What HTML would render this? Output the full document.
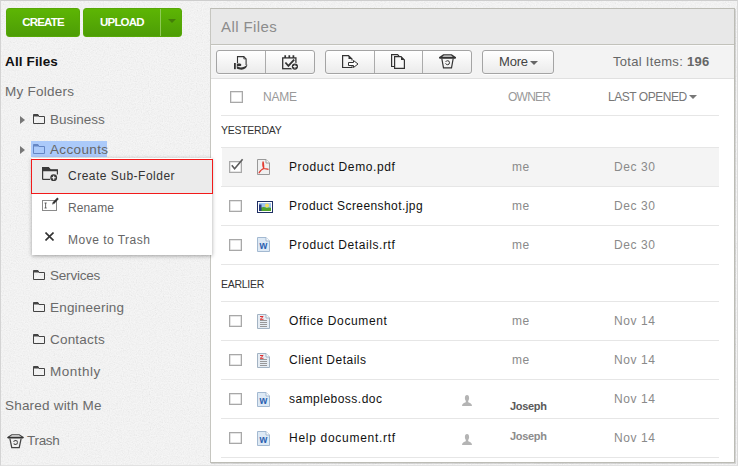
<!DOCTYPE html>
<html><head><meta charset="utf-8"><title>All Files</title>
<style>
*{box-sizing:border-box;margin:0;padding:0}
html,body{width:738px;height:466px;overflow:hidden}
body{background:#f8f8f8;font-family:"Liberation Sans",sans-serif;font-size:12px;color:#333;position:relative}
.abs{position:absolute}
#frame{position:absolute;left:0;top:0;width:738px;height:466px;border-left:1px solid #d4d4d4;border-top:1px solid #cecece;border-right:1px solid #dadada;border-bottom:1px solid #e2e2e2}
.gbtn{position:absolute;top:8px;height:29px;border-radius:3px;background:linear-gradient(#5db504,#4d9d06);color:#fff;font-weight:bold;font-size:11.5px;line-height:27px;text-align:center;border:1px solid #57a806;letter-spacing:-.8px}
.side{position:absolute;font-size:13.5px;color:#6a6a6a;white-space:nowrap;line-height:17px;letter-spacing:.2px}
.fold{position:absolute;width:13px;height:11px}
.tri{position:absolute;width:0;height:0;border-top:4px solid transparent;border-bottom:4px solid transparent;border-left:5px solid #777}
#panel{position:absolute;left:210px;top:8px;width:525px;height:455px;background:#fff;border:1px solid #bcbcb5;border-left-color:#c6c6c0;box-shadow:1px 1px 0 rgba(0,0,0,.12)}
#phead{position:absolute;left:0;top:0;width:523px;height:36px;background:#e8e8e8;border-bottom:1px solid #c2c2bb}
#ptool{position:absolute;left:0;top:36px;width:523px;height:34px;background:#f3f3f3;border-top:1px solid #fafafa;border-bottom:1px solid #e0e0e0}
.tbtn{position:absolute;top:41px;height:24px;border:1px solid #a4a4a4;border-radius:3px;background:linear-gradient(#ffffff,#ebebeb);box-shadow:0 1px 0 rgba(255,255,255,.9)}
.tdiv{position:absolute;top:0;width:1px;height:22px;background:#ababab}
.row{position:absolute;left:10px;width:498px;height:39px;border-bottom:1px solid #e6e6e6}
.cb{position:absolute;left:8px;width:13px;height:12px;border:1px solid #a8a8a8;background:#fff;box-shadow:inset 0 0 0 .5px #ccc}
.fn{position:absolute;left:68px;font-size:12px;color:#111;white-space:nowrap;line-height:16px;letter-spacing:.42px}
.ow{position:absolute;left:291px;font-size:12px;color:#8a8a8a;white-space:nowrap;line-height:16px;letter-spacing:.42px}
.dt{position:absolute;left:393px;font-size:12px;color:#8a8a8a;white-space:nowrap;line-height:16px;letter-spacing:.6px}
.sec{position:absolute;left:10px;font-size:10.5px;color:#333;line-height:14px;letter-spacing:-.27px}
.hd{position:absolute;font-size:12px;color:#999;line-height:14px;white-space:nowrap}
.ic{position:absolute;left:36px}
#menu{position:absolute;left:32px;top:158px;width:180px;height:97px;background:#fff;box-shadow:0 1px 4px rgba(0,0,0,.35);z-index:5}
.mi{position:absolute;left:36px;font-size:12px;color:#666;line-height:16px;white-space:nowrap;letter-spacing:.49px}
</style></head><body>
<svg class="abs" style="left:0;top:0;width:738px;height:466px;opacity:.22" viewBox="0 0 738 466"><filter id="nz" x="0" y="0" width="100%" height="100%"><feTurbulence type="fractalNoise" baseFrequency="0.85" numOctaves="2" seed="3"/><feColorMatrix type="saturate" values="0"/></filter><rect width="738" height="466" filter="url(#nz)"/></svg>
<div id="frame"></div>

<div class="gbtn" style="left:6px;width:74px">CREATE</div>
<div class="gbtn" style="left:83px;width:99px;text-align:left;padding-left:16px">UPLOAD
  <div class="abs" style="left:76px;top:0;width:1px;height:27px;background:#8fc957"></div>
  <div class="abs" style="left:84px;top:10px;width:0;height:0;border-left:4px solid transparent;border-right:4px solid transparent;border-top:4px solid #437f08"></div>
</div>

<div class="side" style="left:5px;top:53px;color:#111;font-weight:bold;letter-spacing:.13px">All Files</div>
<div class="side" style="left:5px;top:83px;letter-spacing:.25px">My Folders</div>

<!-- Business -->
<div class="tri" style="left:20px;top:116px"></div>
<svg class="fold" style="left:33px;top:114px" viewBox="0 0 13 11"><path d="M0.5 9.500V0.500H5L6 2.500H11.500V9.500Z" fill="none" stroke="#444" stroke-width="1"/><path d="M0.500 0.500H5L6 2.500H0.500Z" fill="#444"/></svg>
<div class="side" style="left:50px;top:111px;letter-spacing:0">Business</div>

<!-- Accounts -->
<div class="tri" style="left:20px;top:146px"></div>
<div class="abs" style="left:31px;top:141px;width:76px;height:16px;background:#abcafa"></div>
<svg class="fold" style="left:33px;top:144px" viewBox="0 0 13 11"><path d="M0.5 9.500V0.500H5L6 2.500H11.500V9.500Z" fill="none" stroke="#6486c4" stroke-width="1"/><path d="M0.500 0.500H5L6 2.500H0.500Z" fill="#6486c4"/></svg>
<div class="side" style="left:50px;top:141px;letter-spacing:.37px;color:#666">Accounts</div>

<!-- others -->
<svg class="fold" style="left:33px;top:270px" viewBox="0 0 13 11"><path d="M0.5 9.500V0.500H5L6 2.500H11.500V9.500Z" fill="none" stroke="#444" stroke-width="1"/><path d="M0.500 0.500H5L6 2.500H0.500Z" fill="#444"/></svg>
<div class="side" style="left:50px;top:267px;letter-spacing:-.2px">Services</div>
<svg class="fold" style="left:33px;top:302px" viewBox="0 0 13 11"><path d="M0.5 9.500V0.500H5L6 2.500H11.500V9.500Z" fill="none" stroke="#444" stroke-width="1"/><path d="M0.500 0.500H5L6 2.500H0.500Z" fill="#444"/></svg>
<div class="side" style="left:50px;top:299px">Engineering</div>
<svg class="fold" style="left:33px;top:334px" viewBox="0 0 13 11"><path d="M0.5 9.500V0.500H5L6 2.500H11.500V9.500Z" fill="none" stroke="#444" stroke-width="1"/><path d="M0.500 0.500H5L6 2.500H0.500Z" fill="#444"/></svg>
<div class="side" style="left:50px;top:331px">Contacts</div>
<svg class="fold" style="left:33px;top:366px" viewBox="0 0 13 11"><path d="M0.5 9.500V0.500H5L6 2.500H11.500V9.500Z" fill="none" stroke="#444" stroke-width="1"/><path d="M0.500 0.500H5L6 2.500H0.500Z" fill="#444"/></svg>
<div class="side" style="left:50px;top:363px;letter-spacing:.5px">Monthly</div>

<div class="side" style="left:5px;top:397px">Shared with Me</div>
<svg class="abs" style="left:6.500px;top:433.500px;width:17px;height:15px" viewBox="0 0 16 15" preserveAspectRatio="none"><path d="M4.5 0.800H11.500L15 3.200H1Z" fill="none" stroke="#444" stroke-width="1"/><path d="M0.700 3.700H15.300" stroke="#333" stroke-width="1.6"/><path d="M2.700 4.500L4.500 13.700H11.500L13.300 4.500" fill="none" stroke="#444" stroke-width="1.2"/><circle cx="8" cy="8.500" r="1.900" fill="none" stroke="#444" stroke-width="1" stroke-dasharray="4.500 1.500"/></svg>
<div class="side" style="left:27px;top:432px;letter-spacing:-.3px">Trash</div>

<!-- context menu -->
<div id="menu">
  <div class="abs" style="left:-1px;top:1px;width:182px;height:35px;background:#ebebeb;border:1px solid #f21a1a"></div>
  <svg class="abs" style="left:10px;top:9px;width:17px;height:15px" viewBox="0 0 17 15"><path d="M0.600 12.400V0.600H6.500L8.500 2.800H15.400V7.500" fill="none" stroke="#3a3a3a" stroke-width="1.200"/><path d="M0.600 0.600H6.500L8.500 2.800H15.400V4.300H0.600Z" fill="#3a3a3a"/><path d="M0.600 12.400H8" stroke="#3a3a3a" stroke-width="1.200"/><circle cx="11.700" cy="10.700" r="3.400" fill="#3a3a3a"/><path d="M9.700 10.700H13.700M11.700 8.700V12.700" stroke="#fff" stroke-width="1.100"/></svg>
  <div class="mi" style="top:10px;color:#333">Create Sub-Folder</div>
  <svg class="abs" style="left:10px;top:39px;width:18px;height:15px" viewBox="0 0 18 15"><rect x="0.500" y="3.500" width="14" height="10" fill="#fff" stroke="#8a8a8a" stroke-width="1"/><path d="M2.500 6H4.700M3.600 6V11M2.500 11H4.700" stroke="#444" stroke-width=".8" fill="none"/><path d="M11.300 6.300L16 1.200" stroke="#333" stroke-width="2"/><path d="M10.200 7.600L10.600 5.600L12 7Z" fill="#333"/></svg>
  <div class="mi" style="top:42px;letter-spacing:.12px">Rename</div>
  <svg class="abs" style="left:13px;top:74px;width:9px;height:9px" viewBox="0 0 9 9"><path d="M0.500 0.500L8.500 8.500M8.500 0.500L0.500 8.500" stroke="#333" stroke-width="1.600"/></svg>
  <div class="mi" style="top:74px">Move to Trash</div>
</div>

<!-- main panel -->
<div id="panel">
  <div id="phead"><div class="abs" style="left:10px;top:8px;font-size:15px;color:#8c8c8c;line-height:20px;letter-spacing:.4px;white-space:nowrap">All Files</div></div>
  <div id="ptool"></div>
  <div class="tbtn" style="left:5px;width:99px"><div class="tdiv" style="left:48px"></div>
    <svg class="abs" style="left:17px;top:5px;width:14px;height:14px" viewBox="0 0 14 14"><path d="M3.500 7V0.600H9.800L12.100 2.900V9" fill="none" stroke="#333" stroke-width="1.100"/><path d="M9.800 0.600V2.900H12.100" fill="none" stroke="#333" stroke-width=".8"/><rect x="0" y="7" width="1.800" height="6.200" fill="#333"/><path d="M2.800 7.500H6C7.500 7.700 7.800 9.500 6.500 10.100L2.800 10.300Z" fill="#333"/><path d="M2.800 10C5 12.200 10 12 13.400 8.500C13.200 11.600 10.500 13.700 7.500 13.700C5.500 13.700 4 13.100 2.800 12.500Z" fill="#333"/></svg>
    <svg class="abs" style="left:65px;top:4px;width:17px;height:16px" viewBox="0 0 17 16"><rect x="0.700" y="2.900" width="13.200" height="10.800" fill="none" stroke="#333" stroke-width="1.300"/><path d="M3.200 0.300V3M7.300 0.300V3M11.400 0.300V3" stroke="#333" stroke-width="1.700"/><path d="M3.400 7.500L6.400 10.800L12.200 4.600" fill="none" stroke="#333" stroke-width="1.800"/><circle cx="12.900" cy="11.600" r="3.900" fill="#f6f6f6"/><circle cx="12.900" cy="11.600" r="3.100" fill="#333"/><path d="M11.100 11.600H14.700M12.900 9.800V13.400" stroke="#fff" stroke-width="1"/></svg>
  </div>
  <div class="tbtn" style="left:114px;width:147px"><div class="tdiv" style="left:48px"></div><div class="tdiv" style="left:96px"></div>
    <svg class="abs" style="left:16px;top:4px;width:17px;height:14px" viewBox="0 0 17 14"><path d="M10 11.300V12.500H0.600V0.600H6.500L10 4V5.500" fill="none" stroke="#333" stroke-width="1.200"/><path d="M6.500 0.600V4H10Z" fill="#333"/><path d="M6.500 7.500H11.500V5.500L16 9L11.500 12.500V10.500H6.500Z" fill="#fff" stroke="#333" stroke-width="1"/></svg>
    <svg class="abs" style="left:65px;top:3px;width:15px;height:15px" viewBox="0 0 15 15"><path d="M3.500 12.500H0.600V0.600H6.500L8 2" fill="none" stroke="#333" stroke-width="1.200"/><path d="M3.600 14.400V2.600H10L13.400 6V14.400Z" fill="#f8f8f8" stroke="#333" stroke-width="1.200"/><path d="M10 2.600V6H13.400Z" fill="#333"/></svg>
    <svg class="abs" style="left:112.500px;top:3px;width:17px;height:15px" viewBox="0 0 17 15"><path d="M4.500 0.900H12.500L16 3.500H1Z" fill="none" stroke="#333" stroke-width="1.400"/><path d="M0.500 3.800H16.500" stroke="#333" stroke-width="1.800"/><path d="M2.800 4.500L4.500 13.800H12.500L14.200 4.500" fill="none" stroke="#333" stroke-width="1.200"/><circle cx="8.500" cy="8.700" r="2" fill="none" stroke="#333" stroke-width="1" stroke-dasharray="5 1.500"/></svg>
  </div>
  <div class="tbtn" style="left:271px;width:72px"><div class="abs" style="left:16px;top:3px;font-size:13px;color:#444;line-height:16px;letter-spacing:-.2px">More</div>
    <div class="abs" style="left:47px;top:10px;width:0;height:0;border-left:4px solid transparent;border-right:4px solid transparent;border-top:4px solid #666"></div></div>
  <div class="abs" style="left:402px;top:45px;font-size:13px;color:#666;line-height:16px;white-space:nowrap;letter-spacing:.3px">Total Items: <b>196</b></div>

  <div class="cb" style="left:19px;top:82px"></div>
  <div class="hd" style="left:52px;top:81px;letter-spacing:-.2px">NAME</div>
  <div class="hd" style="left:297px;top:81px;letter-spacing:-.74px">OWNER</div>
  <div class="hd" style="left:397px;top:81px;color:#777;letter-spacing:-.46px">LAST OPENED</div>
  <div class="abs" style="left:478px;top:86px;width:0;height:0;border-left:4px solid transparent;border-right:4px solid transparent;border-top:4px solid #777"></div>
  <div class="abs" style="left:10px;top:106px;width:498px;height:1px;background:#e6e6e6"></div>

  <div class="sec" style="top:114px">YESTERDAY</div>
  <div class="row" style="top:138px;background:linear-gradient(to right,#fff 1px,#f4f4f4 1px);border-top:1px solid #e6e6e6;height:40px">
    <div class="cb" style="top:13px"></div>
    <svg class="abs" style="left:9px;top:10px;width:14px;height:14px" viewBox="0 0 14 14"><path d="M1.800 7.300L4.600 10.800L12.600 1.200" fill="none" stroke="#5c5c5c" stroke-width="1.600"/></svg>
    <svg class="ic" style="top:11px;width:13px;height:16px" viewBox="0 0 13 16"><path d="M0.500 0.500H9L12.500 4V15.500H0.500Z" fill="#f0f0f0" stroke="#999" stroke-width="1"/><path d="M9 0.500V4H12.500" fill="#fff" stroke="#999" stroke-width="1"/><path d="M6 2.500C5.500 6 5.800 8 7 9.500C8.500 10 10.500 9.500 11.500 10.500M7 9.500C5 10 3 12 1.800 14.200M6 2.500C7 5 6.500 7 6.800 9.500" fill="none" stroke="#e23b30" stroke-width="1.200"/></svg>
    <div class="fn" style="top:11px;letter-spacing:.61px">Product Demo.pdf</div><div class="ow" style="top:11px">me</div><div class="dt" style="top:11px">Dec 30</div></div>
  <div class="row" style="top:178px"><div class="cb" style="top:13px"></div>
    <svg class="ic" style="top:14px;width:16px;height:12px" viewBox="0 0 16 12"><rect x="0.500" y="0.500" width="15" height="11" fill="#fff" stroke="#1f2f63" stroke-width="1"/><rect x="2" y="2" width="12" height="8" fill="#9fc4ee"/><circle cx="10" cy="4.500" r="2" fill="#f6e05a"/><path d="M4 10V6.500C6 5.500 8 6 10 7C11.500 6.300 13 6.500 14 7V10Z" fill="#4fa52e"/><rect x="2" y="3.500" width="2.500" height="6.500" fill="#2b3f80"/></svg>
    <div class="fn" style="top:11px">Product Screenshot.jpg</div><div class="ow" style="top:11px">me</div><div class="dt" style="top:11px">Dec 30</div></div>
  <div class="row" style="top:217px"><div class="cb" style="top:13px"></div>
    <svg class="ic" style="top:11px;width:13px;height:15px" viewBox="0 0 13 15"><path d="M0.500 0.500H9L12.500 4V14.500H0.500Z" fill="#dde9f5" stroke="#a3b9d1" stroke-width="1"/><path d="M9 0.500V4H12.500" fill="#fff" stroke="#a3b9d1" stroke-width="1"/><text x="6.400" y="12.300" font-family="Liberation Sans, sans-serif" font-size="10" font-weight="bold" fill="#2b5fb0" text-anchor="middle">w</text></svg>
    <div class="fn" style="top:11px;letter-spacing:.58px">Product Details.rtf</div><div class="ow" style="top:11px">me</div><div class="dt" style="top:11px">Dec 30</div></div>

  <div class="sec" style="top:268px">EARLIER</div>
  <div class="row" style="top:292px;border-top:1px solid #e6e6e6;height:40px"><div class="cb" style="top:13px"></div>
    <svg class="ic" style="top:12px;width:13px;height:15px" viewBox="0 0 13 15"><path d="M0.500 0.500H9L12.500 4V14.500H0.500Z" fill="#e6edf4" stroke="#a3b3c3" stroke-width="1"/><path d="M9 0.500V4H12.500" fill="#fff" stroke="#a3b3c3" stroke-width="1"/><path d="M3 2.500H6.200L3.200 5.300H6.500" fill="none" stroke="#e03030" stroke-width="1"/><path d="M3 6.500H10M3 8.500H10M3 10.500H10M3 12.500H10" stroke="#8e8e8e" stroke-width=".9"/></svg>
    <div class="fn" style="top:11px;letter-spacing:.62px">Office Document</div><div class="ow" style="top:11px">me</div><div class="dt" style="top:11px">Nov 14</div></div>
  <div class="row" style="top:332px"><div class="cb" style="top:13px"></div>
    <svg class="ic" style="top:12px;width:13px;height:15px" viewBox="0 0 13 15"><path d="M0.500 0.500H9L12.500 4V14.500H0.500Z" fill="#e6edf4" stroke="#a3b3c3" stroke-width="1"/><path d="M9 0.500V4H12.500" fill="#fff" stroke="#a3b3c3" stroke-width="1"/><path d="M3 2.500H6.200L3.200 5.300H6.500" fill="none" stroke="#e03030" stroke-width="1"/><path d="M3 6.500H10M3 8.500H10M3 10.500H10M3 12.500H10" stroke="#8e8e8e" stroke-width=".9"/></svg>
    <div class="fn" style="top:11px;letter-spacing:.48px">Client Details</div><div class="ow" style="top:11px">me</div><div class="dt" style="top:11px">Nov 14</div></div>
  <div class="row" style="top:371px"><div class="cb" style="top:13px"></div>
    <svg class="ic" style="top:12px;width:13px;height:15px" viewBox="0 0 13 15"><path d="M0.500 0.500H9L12.500 4V14.500H0.500Z" fill="#dde9f5" stroke="#a3b9d1" stroke-width="1"/><path d="M9 0.500V4H12.500" fill="#fff" stroke="#a3b9d1" stroke-width="1"/><text x="6.400" y="12.300" font-family="Liberation Sans, sans-serif" font-size="10" font-weight="bold" fill="#2b5fb0" text-anchor="middle">w</text></svg>
    <div class="fn" style="top:11px;letter-spacing:.48px">sampleboss.doc</div>
    <svg class="abs" style="left:241px;top:15px;width:10px;height:11px" viewBox="0 0 10 11"><ellipse cx="5" cy="3" rx="2.100" ry="3" fill="#b4b4b4"/><path d="M0 11C0 8.500 2 8 3.800 7.200V5H6.200V7.200C8 8 10 8.500 10 11Z" fill="#b4b4b4"/></svg>
    <div class="ow" style="top:18px;left:289px;font-size:11px;font-weight:bold;color:#5a5a5a;letter-spacing:-.3px">Joseph</div><div class="dt" style="top:11px">Nov 14</div></div>
  <div class="row" style="top:410px"><div class="cb" style="top:13px"></div>
    <svg class="ic" style="top:12px;width:13px;height:15px" viewBox="0 0 13 15"><path d="M0.500 0.500H9L12.500 4V14.500H0.500Z" fill="#dde9f5" stroke="#a3b9d1" stroke-width="1"/><path d="M9 0.500V4H12.500" fill="#fff" stroke="#a3b9d1" stroke-width="1"/><text x="6.400" y="12.300" font-family="Liberation Sans, sans-serif" font-size="10" font-weight="bold" fill="#2b5fb0" text-anchor="middle">w</text></svg>
    <div class="fn" style="top:11px;letter-spacing:.71px">Help document.rtf</div>
    <svg class="abs" style="left:241px;top:15px;width:10px;height:11px" viewBox="0 0 10 11"><ellipse cx="5" cy="3" rx="2.100" ry="3" fill="#b4b4b4"/><path d="M0 11C0 8.500 2 8 3.800 7.200V5H6.200V7.200C8 8 10 8.500 10 11Z" fill="#b4b4b4"/></svg>
    <div class="ow" style="top:9px;left:289px;font-size:11px;font-weight:bold;color:#8c8c8c;letter-spacing:-.3px">Joseph</div><div class="dt" style="top:11px">Nov 14</div></div>
</div>
</body></html>
